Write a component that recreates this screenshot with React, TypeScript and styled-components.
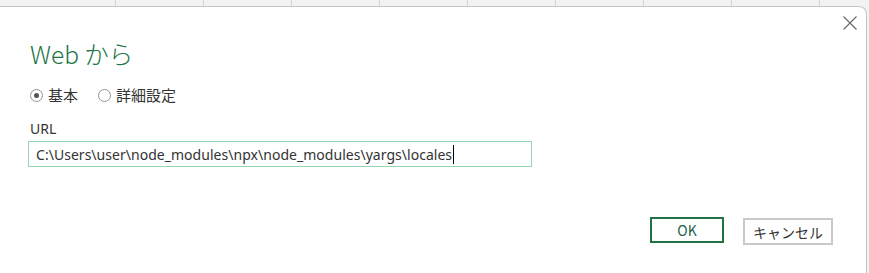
import React from "react";
import styled, { createGlobalStyle } from "styled-components";

const Global = createGlobalStyle`
  html, body { margin: 0; padding: 0; background: #ffffff; overflow: hidden; }
  body { font-family: "Noto Sans", "Noto Sans CJK JP", sans-serif; }
  * { box-sizing: border-box; }
`;

const Page = styled.div`
  width: 869px;
  height: 273px;
  display: flex;
  flex-direction: column;
  background: #f3f3f3;
`;

const Strip = styled.div`
  height: 6px;
  flex: none;
  background-color: #f2f2f2;
  background-image: repeating-linear-gradient(
    to right,
    transparent 0,
    transparent 87px,
    #d4d4d4 87px,
    #d4d4d4 88px
  );
  background-position: 28px 0;
`;

const Dialog = styled.div`
  flex: 1;
  margin-left: -10px;
  margin-right: 2px;
  background: #ffffff;
  border-top: 1px solid #c4c4c4;
  border-right: 1px solid #c4c4c4;
  border-top-right-radius: 8px;
  display: flex;
  flex-direction: column;
  padding: 0 9px 0 40px;
`;

const CloseRow = styled.div`
  display: flex;
  justify-content: flex-end;
  margin-top: 9px;
`;

const CloseButton = styled.button`
  width: 14px;
  height: 14px;
  padding: 0;
  border: none;
  background: transparent;
  display: flex;
  cursor: pointer;
`;

const Title = styled.h1`
  margin: 9px 0 0 0;
  font-family: "Noto Sans CJK JP", sans-serif;
  font-weight: 300;
  font-size: 24.5px;
  line-height: 30px;
  color: #217346;
`;

const RadioGroup = styled.div`
  display: flex;
  align-items: center;
  gap: 20px;
  margin-top: 16px;
  height: 20px;
`;

const RadioLabel = styled.label`
  display: flex;
  align-items: center;
  gap: 5px;
  font-family: "Noto Sans CJK JP", sans-serif;
  font-size: 15px;
  line-height: 20px;
  color: #333333;
`;

const RadioCircle = styled.span<{ $checked?: boolean }>`
  width: 13px;
  height: 13px;
  border-radius: 50%;
  border: 1px solid #959595;
  display: flex;
  align-items: center;
  justify-content: center;
  background: #ffffff;
  &::after {
    content: "";
    width: 5px;
    height: 5px;
    border-radius: 50%;
    background: ${(p) => (p.$checked ? "#555555" : "transparent")};
  }
`;

const FieldLabel = styled.div`
  margin-top: 15px;
  font-family: "Noto Sans", sans-serif;
  font-size: 14px;
  line-height: 18px;
  color: #333333;
`;

const UrlBox = styled.div`
  margin-top: 3px;
  margin-left: -2px;
  width: 504px;
  height: 26px;
  border: 1px solid #97d6b3;
  display: flex;
  align-items: center;
  padding-left: 7px;
  font-family: "Noto Sans", sans-serif;
  font-size: 14px;
  letter-spacing: 0.03px;
  color: #333333;
  white-space: nowrap;
`;

const Caret = styled.span`
  display: inline-block;
  width: 1px;
  height: 19px;
  background: #000000;
  margin-left: 1px;
`;

const Footer = styled.div`
  display: flex;
  justify-content: flex-end;
  gap: 19px;
  margin-top: 50px;
  padding-right: 24px;
  align-items: flex-start;
`;

const Button = styled.button<{ $primary?: boolean }>`
  height: ${(p) => (p.$primary ? "26px" : "27px")};
  width: ${(p) => (p.$primary ? "74px" : "90px")};
  margin-top: ${(p) => (p.$primary ? "0" : "1px")};
  background: #ffffff;
  border: 2px solid ${(p) => (p.$primary ? "#217346" : "#c9c9c9")};
  font-family: "Noto Sans CJK JP", sans-serif;
  font-size: 14px;
  color: ${(p) => (p.$primary ? "#1f5f4a" : "#333333")};
  padding: 0;
  cursor: pointer;
`;

export default function App() {
  return (
    <>
      <Global />
      <Page>
        <Strip />
        <Dialog>
          <CloseRow>
            <CloseButton aria-label="閉じる">
              <svg width="14" height="14" viewBox="0 0 14 14">
                <path d="M0.5 0.5 L13.5 13.5 M13.5 0.5 L0.5 13.5" stroke="#666" strokeWidth="1.1" fill="none" />
              </svg>
            </CloseButton>
          </CloseRow>
          <Title>Web から</Title>
          <RadioGroup>
            <RadioLabel>
              <RadioCircle $checked />
              基本
            </RadioLabel>
            <RadioLabel>
              <RadioCircle />
              詳細設定
            </RadioLabel>
          </RadioGroup>
          <FieldLabel>URL</FieldLabel>
          <UrlBox>
            C:\Users\user\node_modules\npx\node_modules\yargs\locales
            <Caret />
          </UrlBox>
          <Footer>
            <Button $primary>OK</Button>
            <Button>キャンセル</Button>
          </Footer>
        </Dialog>
      </Page>
    </>
  );
}
